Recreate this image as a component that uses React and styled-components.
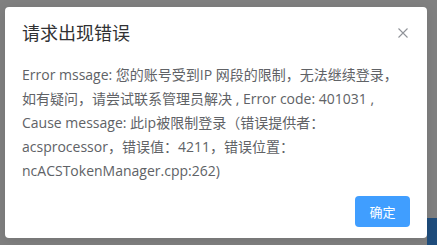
import React from "react";
import styled, { createGlobalStyle } from "styled-components";

const Global = createGlobalStyle`
  html, body { margin: 0; padding: 0; }
  body {
    background: #808080;
    width: 437px;
    height: 245px;
    overflow: hidden;
    font-family: "Open Sans", "Noto Sans CJK SC", sans-serif;
  }
`;

const Screen = styled.div`
  position: relative;
  width: 437px;
  height: 245px;
  padding: 7px 0 0 5px;
  box-sizing: border-box;
`;

const BehindPatch = styled.div`
  position: absolute;
  right: 0;
  bottom: 0;
  width: 10px;
  height: 27px;
  background: #1f4d7c;
`;

const Dialog = styled.div`
  position: relative;
  width: 422px;
  height: 231px;
  box-sizing: border-box;
  background: #fff;
  border-radius: 4px;
  box-shadow: 0 2px 12px rgba(0, 0, 0, 0.1);
  display: flex;
  flex-direction: column;
  padding: 14px 17px 11px 17px;
`;

const Title = styled.div`
  font-size: 18px;
  line-height: 24px;
  color: #303133;
`;

const Close = styled.button`
  position: absolute;
  top: 21px;
  right: 19px;
  width: 10px;
  height: 10px;
  padding: 0;
  border: 0;
  background: none;
  cursor: pointer;
  display: flex;
`;

const Body = styled.div`
  margin-top: 18px;
  font-size: 14px;
  line-height: 24px;
  color: #606266;
`;

const Line = styled.div`
  white-space: nowrap;
`;

const Footer = styled.div`
  margin-top: auto;
  display: flex;
  justify-content: flex-end;
`;

const Button = styled.button`
  width: 55px;
  height: 31px;
  border: 0;
  border-radius: 4px;
  background: #409eff;
  color: #fff;
  font-family: "Noto Sans CJK SC", sans-serif;
  font-size: 13px;
  padding: 0;
`;

const lines = [
  "Error mssage: 您的账号受到IP 网段的限制，无法继续登录，",
  "如有疑问，请尝试联系管理员解决 , Error code: 401031 ,",
  "Cause message: 此ip被限制登录（错误提供者：",
  "acsprocessor，错误值：4211，错误位置：",
  "ncACSTokenManager.cpp:262)",
];

export default function App() {
  return (
    <>
      <Global />
      <Screen>
        <BehindPatch />
        <Dialog>
          <Title>请求出现错误</Title>
          <Close aria-label="close">
            <svg width="10" height="10" viewBox="0 0 10 10">
              <path d="M0.5 0.5 L9.5 9.5 M9.5 0.5 L0.5 9.5" stroke="#909399" strokeWidth="1.1" fill="none" />
            </svg>
          </Close>
          <Body>
            {lines.map((l, i) => (
              <Line key={i}>{l}</Line>
            ))}
          </Body>
          <Footer>
            <Button>确定</Button>
          </Footer>
        </Dialog>
      </Screen>
    </>
  );
}
